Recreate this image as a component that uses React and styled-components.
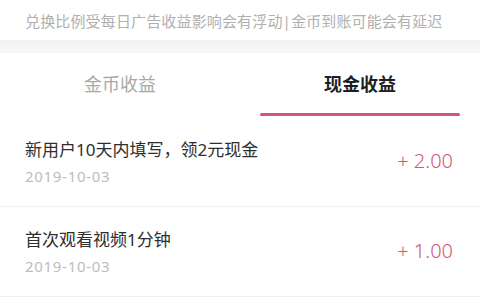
import React, { useState } from "react";
import styled, { createGlobalStyle } from "styled-components";

const GlobalStyle = createGlobalStyle`
  body {
    margin: 0;
    background: #fff;
    font-family: "Noto Sans", "Noto Sans CJK SC", sans-serif;
  }
`;

const Page = styled.div`
  width: 480px;
  height: 300px;
  overflow: hidden;
  background: #fff;
`;

const Notice = styled.div`
  height: 40px;
  display: flex;
  align-items: center;
  padding-left: 25px;
  font-size: 15px;
  letter-spacing: 0.15px;
  color: #b0b0b0;
  white-space: nowrap;
`;

const Band = styled.div`
  height: 13px;
  background: linear-gradient(#f2f2f2, #f8f8f8);
`;

const Tabs = styled.div`
  display: grid;
  grid-template-columns: 1fr 1fr;
  height: 64px;
`;

const Tab = styled.button`
  position: relative;
  border: 0;
  background: none;
  padding: 0 0 4px;
  font-family: inherit;
  font-size: 18px;
  font-weight: ${(p) => (p.$active ? 700 : 400)};
  color: ${(p) => (p.$active ? "#1f1f1f" : "#a8a8a8")};
  cursor: pointer;

  &::after {
    content: "";
    display: ${(p) => (p.$active ? "block" : "none")};
    position: absolute;
    left: 20px;
    right: 20px;
    bottom: 1px;
    height: 3px;
    border-radius: 2px;
    background: #d3557b;
  }
`;

const Row = styled.div`
  display: flex;
  align-items: center;
  justify-content: space-between;
  height: 89px;
  padding: 0 27px 0 25px;
  border-bottom: 1px solid #f0f0f0;
`;

const Info = styled.div`
  display: flex;
  flex-direction: column;
  gap: 4px;
`;

const Title = styled.div`
  font-size: 17px;
  line-height: 24px;
  color: #2e2e2e;
`;

const DateText = styled.div`
  font-size: 15px;
  line-height: 20px;
  letter-spacing: 0.7px;
  color: #bdbdbd;
`;

const Amount = styled.div`
  font-size: 20px;
  font-weight: 300;
  color: #d3557b;
  margin-top: -2px;
`;

const records = [
  { title: "新用户10天内填写，领2元现金", date: "2019-10-03", amount: "+ 2.00" },
  { title: "首次观看视频1分钟", date: "2019-10-03", amount: "+ 1.00" },
];

export default function App() {
  const [tab, setTab] = useState(1);

  return (
    <Page>
      <GlobalStyle />
      <Notice>兑换比例受每日广告收益影响会有浮动|金币到账可能会有延迟</Notice>
      <Band />
      <Tabs>
        <Tab $active={tab === 0} onClick={() => setTab(0)}>
          金币收益
        </Tab>
        <Tab $active={tab === 1} onClick={() => setTab(1)}>
          现金收益
        </Tab>
      </Tabs>
      {records.map((r) => (
        <Row key={r.title}>
          <Info>
            <Title>{r.title}</Title>
            <DateText>{r.date}</DateText>
          </Info>
          <Amount>{r.amount}</Amount>
        </Row>
      ))}
    </Page>
  );
}
